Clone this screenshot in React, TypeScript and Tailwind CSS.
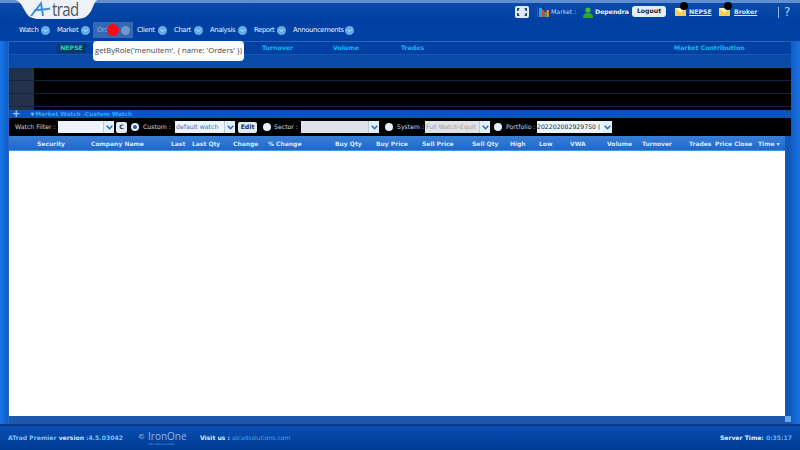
const nav = [
  { label: "Watch", w: "w-[19px]", ml: "ml-0" },
  { label: "Market", w: "w-[21px]", ml: "ml-[7px]" },
];
const navRest = [
  { label: "Client", w: "w-[18px]" },
  { label: "Chart", w: "w-[17px]" },
  { label: "Analysis", w: "w-[25px]" },
  { label: "Report", w: "w-[20px]" },
  { label: "Announcements", w: "w-[49px]" },
];
const cols = [
  "Security", "Company Name", "Last", "Last Qty", "Change", "% Change", "Buy Qty", "Buy Price", "Sell Price",
  "Sell Qty", "High", "Low", "VWA", "Volume", "Turnover", "Trades", "Price Close", "Time",
];

function Dot() {
  return (
    <span className="ml-[3px] flex h-[9px] w-[9px] items-center justify-center rounded-full bg-[#63ace6]">
      <svg width="5" height="3" viewBox="0 0 5 3"><path d="M0.5 0.5 L2.5 2.5 L4.5 0.5" stroke="#e8f4ff" strokeWidth="0.8" fill="none" /></svg>
    </span>
  );
}

function Radio({ on = false }: { on?: boolean }) {
  return (
    <span className="flex h-[8px] w-[8px] shrink-0 items-center justify-center rounded-full bg-[#e6f0fb]">
      {on && <span className="h-[4px] w-[4px] rounded-full bg-[#1f5fb0]" />}
    </span>
  );
}

function Chevron() {
  return <svg width="7" height="5" viewBox="0 0 7 5"><path d="M0.7 0.8 L3.5 3.8 L6.3 0.8" stroke="#1f6bb5" strokeWidth="1.4" fill="none" /></svg>;
}

function Select({ w, text, muted = false, disabled = false }: { w: string; text?: string; muted?: boolean; disabled?: boolean }) {
  return (
    <span className={`flex h-[12px] shrink-0 items-center overflow-hidden ${w} ${disabled ? "bg-[#dfe3e8]" : "bg-[#eef4fc]"}`}>
      <span className={`min-w-0 flex-1 whitespace-nowrap pl-[1px] text-[6.2px] ${muted ? "text-[#9a9a9a]" : "text-[#2d6fc0]"}`}>{text}</span>
      <span className="flex h-full w-[11px] shrink-0 items-center justify-center border-l border-[#b8c8dc] bg-[#e4eefa]">
        <Chevron />
      </span>
    </span>
  );
}

function Envelope() {
  return (
    <svg width="11" height="8" viewBox="0 0 11 8">
      <rect width="11" height="8" fill="#f7cf58" />
      <path d="M0 0 L5.5 4.5 L11 0 Z" fill="#fff4c4" />
    </svg>
  );
}

export default function App() {
  return (
    <div className="relative flex h-[450px] w-[800px] flex-col overflow-hidden bg-[#0040a2] font-['DejaVu_Sans',sans-serif] text-white">
      {/* Top bar */}
      <header className="flex h-[21px] shrink-0 border-t-[3px] border-[#5f8fd0] bg-gradient-to-b from-[#0b4aa8] to-[#0040a2]">
        <div className="relative -mt-[3px] ml-[14px] h-[20px] w-[84px] shrink-0">
          <svg width="84" height="20" viewBox="0 0 84 20" className="absolute inset-0">
            <path d="M0 0 C6 0 8 6 11 11 C14 17 18 19 26 19 L62 19 C72 19 75 15 78 9 C80 5 81 0 84 0 Z" fill="#eef1f5" />
            <path d="M17 16 L27 3.5 L29 16 M20 10.5 C25 9.5 30 10 36 8.5" stroke="#3b8ed6" strokeWidth="2" fill="none" />
          </svg>
          <span className="absolute left-[38px] top-[4px] origin-bottom scale-y-125 font-['Open_Sans',sans-serif] text-[15px] leading-[12px] tracking-[-0.6px] text-[#4d5666]">trad</span>
        </div>
        <div className="ml-[417px] flex items-center text-[6.2px] whitespace-nowrap">
          <svg width="14" height="12" viewBox="0 0 14 12">
            <rect width="14" height="12" rx="2" fill="#dfe8f4" />
            <path d="M2 2 H5 L4 3 V4 L3 5 H2 Z M12 2 H9 L10 3 V4 L11 5 H12 Z M2 10 H5 L4 9 V8 L3 7 H2 Z M12 10 H9 L10 9 V8 L11 7 H12 Z" fill="#33465e" />
          </svg>
          <span className="ml-[8px] h-[10px] w-px bg-[#2a60b5]" />
          <svg className="ml-[1px]" width="10" height="10" viewBox="0 0 10 10">
            <rect x="0" y="1" width="3" height="9" fill="#3aa0e0" />
            <rect x="3" y="3" width="2.5" height="7" fill="#d04a3a" />
            <rect x="5.5" y="5" width="2" height="5" fill="#4fb04a" />
            <rect x="7.5" y="3" width="2.5" height="7" fill="#e08a30" />
          </svg>
          <span className="ml-[2px] w-[32px] text-[#b8d4f2]">Market :</span>
          <svg width="10" height="11" viewBox="0 0 10 11">
            <circle cx="5" cy="3" r="2.6" fill="#3fbf3f" />
            <path d="M0 11 C0 7 2 6 5 6 C8 6 10 7 10 11 Z" fill="#2fa62f" />
          </svg>
          <span className="ml-[2px] w-[37px] font-bold text-[#e8f3ff]">Dependra</span>
          <span className="flex h-[11px] w-[34px] -translate-y-[1px] items-center justify-center rounded-[3px] bg-[#e6edf6] font-bold text-[#1d2633]">Logout</span>
          <span className="ml-[9px] flex"><Envelope /></span>
          <span className="ml-[3px] w-[30px] font-bold text-[#d8e8fa] underline">NEPSE</span>
          <span className="flex"><Envelope /></span>
          <span className="ml-[4px] w-[44px] font-bold text-[#d8e8fa] underline">Broker</span>
          <span className="h-[11px] w-px bg-[#8fb4e2]" />
          <span className="ml-[5px] text-[12px] leading-none text-[#b8d4f2]">?</span>
        </div>
      </header>

      {/* Nav */}
      <nav className="mt-[1px] flex h-[16px] shrink-0 items-center pl-[19px] text-[6.8px] tracking-[-0.35px] text-[#e8f3ff]">
        {nav.map((n) => (
          <span key={n.label} className={`flex items-center ${n.ml}`}>
            <span className={`${n.w} whitespace-nowrap`}>{n.label}</span>
            <Dot />
          </span>
        ))}
        <span className="ml-[3px] flex h-[16px] w-[40px] items-center bg-[#3468b4] pl-[4px]">
          <span className="w-[21px] text-[#8fb2e0]">Orders</span>
          <span className="ml-[3px] flex h-[9px] w-[9px] rounded-full bg-[#6d95cf]" />
        </span>
        {navRest.map((n, i) => (
          <span key={n.label} className={`flex items-center ${i === 0 ? "ml-[4px]" : "ml-[7px]"}`}>
            <span className={`${n.w} whitespace-nowrap`}>{n.label}</span>
            <Dot />
          </span>
        ))}
      </nav>

      {/* Body with side rails */}
      <div className="mt-[3px] flex min-h-0 flex-1">
        <div className="w-[8px] shrink-0 bg-gradient-to-r from-[#1976e8] to-[#0d5ccb]" />
        <main className="flex min-w-0 flex-1 flex-col border-l border-[#2a66bd]">
          {/* Indices */}
          <section className="flex h-[14px] shrink-0 items-center border-t border-b border-t-[#2a66bd] border-b-[#1a55ad] text-[6.2px] font-bold whitespace-nowrap text-[#19b6ea]">
            <span className="ml-[48px] flex h-[9px] w-[29px] items-center justify-center bg-[#10365f] text-[#1fd6c0]">NEPSE</span>
            <span className="ml-[176px] w-[71px]">Turnover</span>
            <span className="w-[68px]">Volume</span>
            <span className="w-[273px]">Trades</span>
            <span>Market Contribution</span>
          </section>
          <div className="h-[13px] shrink-0 bg-[#0a4aa9]" />
          <section className="flex h-[42px] shrink-0 flex-col bg-black">
            {[0, 1, 2].map((r) => (
              <div key={r} className="flex h-[13px] border-b border-[#14233f]">
                <span className="w-[25px] bg-[#23324a]" />
              </div>
            ))}
            <div className="flex flex-1"><span className="w-[25px] bg-[#23324a]" /></div>
          </section>

          {/* Watch title */}
          <div className="flex h-[8px] shrink-0 items-end bg-[#0a55b8] text-[5.8px] font-bold leading-[7px] whitespace-nowrap text-[#38a6f0]">
            <span className="ml-[3px] text-[10px] leading-[8px] text-[#8fd0ff]">+</span>
            <span className="ml-[10px] text-[5px] leading-[7px] text-[#6fc0f5]">▼</span>
            <span className="ml-[1px]">Market Watch -Custom Watch</span>
          </div>

          {/* Filter bar */}
          <div className="flex h-[18px] shrink-0 items-center bg-black text-[6.2px] whitespace-nowrap text-[#d0d8e2]">
            <span className="ml-[6px] w-[43px]">Watch Filter :</span>
            <Select w="w-[56px]" />
            <span className="ml-[2px] flex h-[11px] w-[11px] items-center justify-center rounded-[2px] bg-[#e2eaf4] font-bold text-[#18304f]">C</span>
            <span className="ml-[4px]"><Radio on /></span>
            <span className="ml-[4px] w-[32px]">Custom :</span>
            <Select w="w-[60px]" text="default watch" />
            <span className="ml-[3px] flex h-[11px] w-[19px] items-center justify-center rounded-[2px] bg-[#e2eaf4] font-bold text-[#18304f]">Edit</span>
            <span className="ml-[6px]"><Radio /></span>
            <span className="ml-[3px] w-[27px]">Sector :</span>
            <Select w="w-[78px]" disabled />
            <span className="ml-[6px]"><Radio /></span>
            <span className="ml-[4px] w-[28px]">System :</span>
            <Select w="w-[65px]" text="Full Watch-Equit" muted disabled />
            <span className="ml-[4px]"><Radio /></span>
            <span className="ml-[4px] w-[31px]">Portfolio :</span>
            <span className="flex h-[12px] w-[75px] shrink-0 items-center overflow-hidden bg-[#eef4fc]">
              <span className="min-w-0 flex-1 whitespace-nowrap text-[6.2px] text-[#20272f]">202202082929750 ( -</span>
              <span className="flex h-full w-[10px] shrink-0 items-center justify-center bg-[#e4eefa]">
                <Chevron />
              </span>
            </span>
          </div>

          {/* Table */}
          <div className="flex min-h-0 flex-1">
            <div className="flex min-w-0 flex-1 flex-col">
              <div className="grid h-[14px] shrink-0 grid-cols-[54px_80px_21px_41px_35px_67px_41px_46px_50px_38px_29px_31px_37px_35px_47px_26px_43px_1fr] items-center bg-gradient-to-b from-[#3a7fd6] to-[#1d68cc] pl-[28px] text-[6px] font-bold whitespace-nowrap text-[#d8e8fa]">
                {cols.map((c) => (
                  <span key={c}>{c === "Time" ? "Time ▾" : c}</span>
                ))}
              </div>
              <div className="flex-1 border-t border-[#3f9bf0] bg-white" />
            </div>
            <div className="w-[6px] shrink-0 bg-[#1258b8]" />
          </div>

          {/* Bottom strip of the grid */}
          <div className="h-[8px] shrink-0 bg-[#1d58ad]" />
        </main>
        <div className="w-[9px] shrink-0 bg-gradient-to-r from-[#0f5cc7] to-[#1a72e0]" />
      </div>

      {/* Footer */}
      <footer className="flex h-[26px] shrink-0 items-center border-t-2 border-[#083a86] bg-gradient-to-b from-[#0a4fb2] to-[#003a94] pb-[1px] text-[6.1px] whitespace-nowrap">
        <span className="ml-[8px] w-[130px] font-bold text-[#7cc0f5]">ATrad Premier <span className="text-[#cfe3f8]">version</span> :4.5.03042</span>
        <span className="text-[7px] text-[#9cc4ee]">©</span>
        <span className="ml-[3px] flex w-[52px] flex-col items-start">
          <span className="font-['Open_Sans',sans-serif] text-[10px] leading-[13px] text-[#8db8e6]">IronOne</span>
          <span className="text-[2.5px] leading-[3px] tracking-[0.6px] text-[#8db8e6]">TECHNOLOGIES</span>
        </span>
        <span className="font-bold text-[#dcecfc]">Visit us :</span>
        <span className="ml-[2px] text-[#4ba2ec]">atradsolutions.com</span>
        <span className="ml-auto mr-[8px] font-bold text-[#dcecfc]">Server Time: <span className="text-[#5fb0f2]">0:35:17</span></span>
      </footer>

      {/* Overlays */}
      <div className="absolute left-[93px] top-[41px] flex h-[20px] w-[151px] items-center justify-center rounded-[4px] bg-white font-['Open_Sans',sans-serif] text-[7.7px] whitespace-nowrap text-[#444]">
        getByRole('menuitem', {"{"} name: 'Orders' {"}"})
      </div>
      <span className="absolute left-[107px] top-[24px] h-[12px] w-[12px] rounded-full bg-[#fa0a14]" />
      <span className="absolute left-[680px] top-[2px] h-[8px] w-[8px] rounded-full bg-black" />
      <span className="absolute left-[724px] top-[2px] h-[8px] w-[8px] rounded-full bg-black" />
      <span className="absolute left-[785px] top-[416px] h-[6px] w-[6px] bg-[#6aa8ea]" />
    </div>
  );
}
